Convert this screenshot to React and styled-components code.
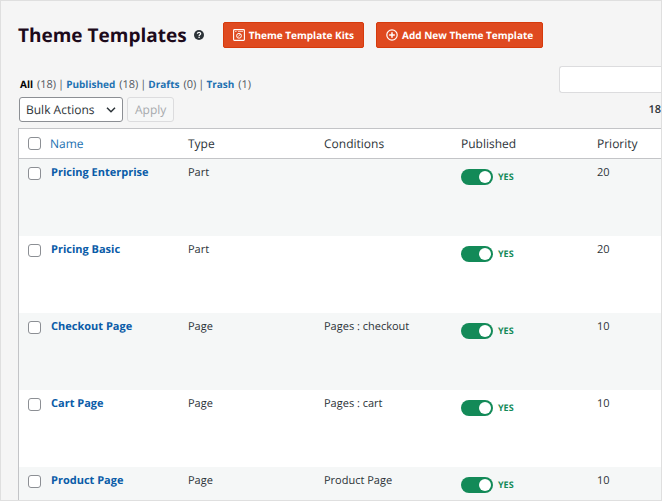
import React, { useState } from 'react';
//Style
import styled, { createGlobalStyle } from 'styled-components';

const templates = [
   { name: 'Pricing Enterprise', type: 'Part', conditions: '', priority: 20 },
   { name: 'Pricing Basic', type: 'Part', conditions: '', priority: 20 },
   { name: 'Checkout Page', type: 'Page', conditions: 'Pages : checkout', priority: 10 },
   { name: 'Cart Page', type: 'Page', conditions: 'Pages : cart', priority: 10 },
   { name: 'Product Page', type: 'Page', conditions: 'Product Page', priority: 10 },
];

const filters = [
   { label: 'All', count: 18, current: true },
   { label: 'Published', count: 18 },
   { label: 'Drafts', count: 0 },
   { label: 'Trash', count: 1 },
];

const HelpIcon = () => (
   <svg width="10" height="10" viewBox="0 0 20 20" aria-hidden="true">
      <circle cx="10" cy="10" r="10" fill="#2c3338" />
      <path d="M6.6 7.6C6.8 5.4 8.3 4.6 10.1 4.6C12 4.6 13.4 5.7 13.4 7.4C13.4 9.6 10.2 9.5 10.2 12" fill="none" stroke="#fff" strokeWidth="2.4" />
      <rect x="8.9" y="13.4" width="2.6" height="2.6" fill="#fff" />
   </svg>
);

const KitIcon = () => (
   <svg width="12" height="12" viewBox="0 0 12 12" fill="none" stroke="#fff" aria-hidden="true">
      <rect x="0.6" y="0.6" width="10.8" height="10.8" rx="0.8" strokeWidth="1.1" />
      <path d="M2 2.5H3.6M5 2.5H10" strokeWidth="0.8" opacity="0.8" />
      <circle cx="6" cy="6.8" r="2.4" strokeWidth="1" />
      <path d="M5.2 7.6L7.6 5" strokeWidth="0.9" />
   </svg>
);

const PlusIcon = () => (
   <svg width="12" height="12" viewBox="0 0 12 12" fill="none" stroke="#fff" strokeWidth="1.2" aria-hidden="true">
      <circle cx="6" cy="6" r="5.2" />
      <path d="M6 3.2V8.8M3.2 6H8.8" strokeWidth="1.5" />
   </svg>
);

const ChevronIcon = () => (
   <svg width="10" height="6" viewBox="0 0 10 6" fill="none" stroke="#2c3338" strokeWidth="1.5" aria-hidden="true">
      <path d="M1 0.8L5 4.8L9 0.8" />
   </svg>
);

const TemplateRow = ({ template }) => {
   const [published, setPublished] = useState(true);
   return (
      <tr>
         <CheckCell><Checkbox type="checkbox" aria-label={template.name} /></CheckCell>
         <Cell><NameLink href="#">{template.name}</NameLink></Cell>
         <Cell>{template.type}</Cell>
         <Cell>{template.conditions}</Cell>
         <Cell>
            <SwitchLabel>
               <Switch type="checkbox" checked={published} onChange={() => setPublished(!published)} />
               {published ? 'YES' : 'NO'}
            </SwitchLabel>
         </Cell>
         <Cell>{template.priority}</Cell>
      </tr>
   )
};

const App = () => {
   return (
      <Frame>
         <GlobalStyle />
         <Header>
            <Title>Theme Templates</Title>
            <HelpButton aria-label="Help"><HelpIcon /></HelpButton>
            <Actions>
               <ActionButton><KitIcon />Theme Template Kits</ActionButton>
               <ActionButton><PlusIcon />Add New Theme Template</ActionButton>
            </Actions>
         </Header>
         <Toolbar>
            <div>
               <Filters>
                  {filters.map((filter) => (
                     <li key={filter.label}>
                        <FilterLink href="#" $current={filter.current}>{filter.label}</FilterLink>
                        <span>({filter.count})</span>
                     </li>
                  ))}
               </Filters>
               <BulkForm>
                  <SelectWrap>
                     <Select aria-label="Bulk Actions">
                        <option>Bulk Actions</option>
                     </Select>
                     <ChevronIcon />
                  </SelectWrap>
                  <ApplyButton disabled>Apply</ApplyButton>
               </BulkForm>
            </div>
            <SearchArea>
               <Search type="search" aria-label="Search" />
               <Total>18</Total>
            </SearchArea>
         </Toolbar>
         <Table>
            <colgroup>
               <Col $width="31px" />
               <Col $width="138px" />
               <Col $width="136px" />
               <Col $width="137px" />
               <Col $width="136px" />
               <Col />
            </colgroup>
            <thead>
               <tr>
                  <HeadCell><Checkbox type="checkbox" aria-label="Select all" /></HeadCell>
                  <HeadCell><a href="#">Name</a></HeadCell>
                  <HeadCell>Type</HeadCell>
                  <HeadCell>Conditions</HeadCell>
                  <HeadCell>Published</HeadCell>
                  <HeadCell>Priority</HeadCell>
               </tr>
            </thead>
            <tbody>
               {templates.map((template) => (
                  <TemplateRow key={template.name} template={template} />
               ))}
            </tbody>
         </Table>
      </Frame>
   )
};

const GlobalStyle = createGlobalStyle`
   * {
      margin: 0;
      padding: 0;
      box-sizing: border-box;
   }
   body, button, input, select {
      font-family: "Open Sans", "Noto Sans", sans-serif;
      text-rendering: geometricPrecision;
   }
   a {
      color: #2271b1;
      text-decoration: none;
   }
   button {
      cursor: pointer;
   }
`

const Frame = styled.main`
   height: 100vh;
   overflow: hidden;
   padding: 21px 0 0 17px;
   border: 1px solid #dfdfdf;
   background: #f5f5f5;
   color: #2c3338;
`

const Header = styled.header`
   display: flex;
   align-items: center;
   height: 26px;
   white-space: nowrap;
`

const Title = styled.h1`
   color: #1d0a1b;
   font-size: 19px;
   line-height: 26px;
   font-weight: 700;
`

const HelpButton = styled.button`
   display: flex;
   margin-left: 7px;
   border: none;
   background: none;
`

const Actions = styled.div`
   display: flex;
   gap: 12px;
   margin-left: 19px;
`

const ActionButton = styled.button`
   display: flex;
   align-items: center;
   gap: 4px;
   height: 26px;
   padding: 0 9px;
   border: 1px solid #d63a0c;
   border-radius: 2px;
   background: #df4a20;
   color: #fff;
   font-size: 10px;
   font-weight: 700;
   white-space: nowrap;
`

const Toolbar = styled.div`
   display: flex;
   justify-content: space-between;
   padding-top: 18px;
`

const Filters = styled.ul`
   display: flex;
   margin: 10px 0 4px 2px;
   list-style: none;
   color: #50575e;
   font-size: 11px;
   line-height: 16px;
   li + li::before {
      content: '|';
      margin: 0 2px;
   }
   span {
      margin-left: 4px;
   }
`

const FilterLink = styled.a`
   color: ${({ $current }) => ($current ? '#000' : '#2271b1')};
   font-size: 10px;
   font-weight: 700;
`

const BulkForm = styled.div`
   display: flex;
   gap: 4px;
   padding-left: 1px;
`

const SelectWrap = styled.div`
   display: grid;
   align-items: center;
   width: 104px;
   > * {
      grid-area: 1 / 1;
   }
   svg {
      justify-self: end;
      margin-right: 7px;
      pointer-events: none;
   }
`

const Select = styled.select`
   appearance: none;
   width: 100%;
   height: 25px;
   padding: 0 6px;
   border: 1px solid #8c8f94;
   border-radius: 3px;
   background: #fff;
   color: #2c3338;
   font-size: 12px;
`

const ApplyButton = styled.button`
   height: 25px;
   padding: 0 7px;
   border: 1px solid #dcdcde;
   border-radius: 3px;
   background: #f6f7f7;
   color: #a7aaad;
   font-size: 12px;
`

const SearchArea = styled.div`
   display: flex;
   flex-direction: column;
   align-items: flex-end;
   gap: 9px;
`

const Search = styled.input`
   appearance: none;
   width: 102px;
   height: 27px;
   padding: 0 8px;
   border: 1px solid #dcdcde;
   border-right: none;
   border-radius: 3px 0 0 3px;
   background: #fff;
`

const Total = styled.span`
   font-size: 11px;
   line-height: 16px;
   font-weight: 600;
`

const Table = styled.table`
   width: 100%;
   margin-top: 6px;
   table-layout: fixed;
   border: 1px solid #c3c4c7;
   border-right: none;
   border-spacing: 0;
   background: #fff;
   tbody tr:nth-child(odd) {
      background: #f5f7f7;
   }
`

const Col = styled.col`
   width: ${({ $width }) => $width || 'auto'};
`

const HeadCell = styled.th`
   height: 30px;
   border-bottom: 1px solid #c3c4c7;
   color: #2c3338;
   font-size: 12px;
   font-weight: 400;
   text-align: left;
   &:first-child {
      padding-left: 9px;
   }
`

const Cell = styled.td`
   height: 77px;
   padding-top: 6px;
   font-size: 11px;
   line-height: 16px;
   font-weight: 500;
   vertical-align: top;
   white-space: nowrap;
`

const CheckCell = styled(Cell)`
   padding: 8px 0 0 9px;
`

const NameLink = styled.a`
   margin-left: 1px;
   color: #0a5ca8;
   font-size: 11px;
   font-weight: 700;
`

const Checkbox = styled.input`
   appearance: none;
   display: block;
   width: 13px;
   height: 13px;
   border: 1px solid #8c8f94;
   border-radius: 3px;
   background: #fff;
   &:checked {
      background: #2271b1;
   }
`

const SwitchLabel = styled.label`
   display: flex;
   align-items: center;
   gap: 5px;
   margin-top: 4px;
   color: #138a58;
   font-size: 9px;
   font-weight: 700;
`

const Switch = styled.input`
   appearance: none;
   display: flex;
   width: 32px;
   height: 16px;
   padding: 2px;
   border-radius: 8px;
   background: #138a58;
   &::before {
      content: '';
      width: 12px;
      height: 12px;
      border-radius: 50%;
      background: #fff;
   }
   &:checked {
      justify-content: flex-end;
   }
   &:not(:checked) {
      background: #8c8f94;
   }
`

export default App
